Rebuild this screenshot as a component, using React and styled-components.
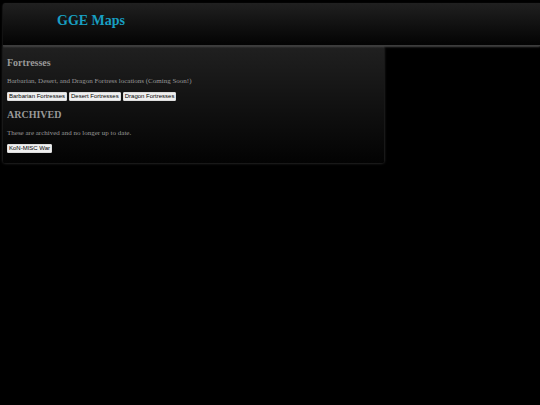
import React from "react";
import styled, { createGlobalStyle } from "styled-components";

const GlobalStyle = createGlobalStyle`
  * {
    box-sizing: border-box;
  }

  body {
    margin: 0;
    background: #000;
    color: #999;
    font-family: "Liberation Serif", "Times New Roman", serif;
    font-size: 7px;
    line-height: 8px;
  }
`;

const Page = styled.div`
  min-height: 100vh;
  padding: 3px 0 8px 3px;
`;

const Header = styled.header`
  position: relative;
  height: 43px;
  padding: 10px 54px;
  background: linear-gradient(#202020, #030303);
  border-radius: 2px 0 0 0;
  border-bottom: 1px solid #3c3c3c;
  box-shadow: 0 1px 2px #444;
`;

const Title = styled.h1`
  margin: 0;
  color: #189fc2;
  font-size: 14px;
  line-height: 16px;
`;

const Panel = styled.main`
  width: 71%;
  padding: 11px 4px 10px;
  background: linear-gradient(#202020, #030303);
  border-radius: 0 0 2px 2px;
  box-shadow: 0 0 3px #444;
`;

const Section = styled.section`
  & + & {
    margin-top: 8px;
  }

  h2 {
    margin: 0;
    font-size: 10px;
    line-height: 12px;
  }

  p {
    margin: 8px 0 7px;
  }
`;

const ButtonRow = styled.div`
  display: flex;
  gap: 2px;
`;

const MapButton = styled.button`
  height: 9px;
  padding: 0 1px;
  border: 1px solid #ddd;
  border-radius: 1px;
  background: #efefef;
  color: #000;
  font-family: "Liberation Sans", Arial, sans-serif;
  font-size: 6px;
  line-height: 7px;
  white-space: nowrap;
`;

const sections = [
  {
    title: "Fortresses",
    text: "Barbarian, Desert, and Dragon Fortress locations (Coming Soon!)",
    maps: ["Barbarian Fortresses", "Desert Fortresses", "Dragon Fortresses"],
  },
  {
    title: "ARCHIVED",
    text: "These are archived and no longer up to date.",
    maps: ["KoN-MISC War"],
  },
];

const App = () => {
  return (
    <>
      <GlobalStyle />
      <Page>
        <Header>
          <Title>GGE Maps</Title>
        </Header>
        <Panel>
          {sections.map(({ title, text, maps }) => (
            <Section key={title}>
              <h2>{title}</h2>
              <p>{text}</p>
              <ButtonRow>
                {maps.map((map) => (
                  <MapButton key={map} type="button">
                    {map}
                  </MapButton>
                ))}
              </ButtonRow>
            </Section>
          ))}
        </Panel>
      </Page>
    </>
  );
};

export default App;
